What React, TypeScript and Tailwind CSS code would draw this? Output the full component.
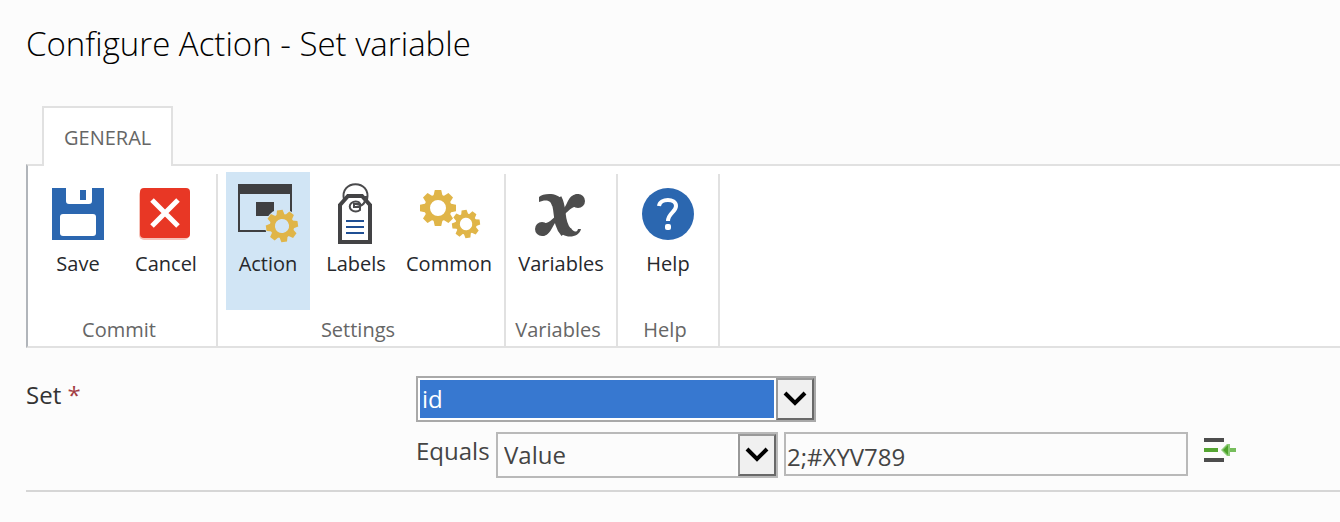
import type { ReactNode, SelectHTMLAttributes } from "react";
import clsx from "clsx";

const TEETH = [0, 45, 90, 135, 180, 225, 270, 315];

type GearProps = { cx: number; cy: number; r: number; turn?: number };

const Gear = ({ cx, cy, r, turn = 0 }: GearProps) => (
  <g transform={`translate(${cx} ${cy}) rotate(${turn}) scale(${r / 18})`}>
    <circle r="10.8" fill="none" stroke="#e0b548" strokeWidth="5.6" />
    {TEETH.map((angle) => (
      <path
        key={angle}
        d="M-4.6-12 L-3.2-18 H3.2 L4.6-12 Z"
        fill="#e0b548"
        transform={`rotate(${angle})`}
      />
    ))}
  </g>
);

const Icon = ({ children }: { children: ReactNode }) => (
  <svg viewBox="0 0 64 64" className="h-16 w-16 shrink-0" aria-hidden="true">
    {children}
  </svg>
);

const SaveIcon = () => (
  <Icon>
    <path d="M6 6H20V19Q20 22 23 22H43Q46 22 46 19V6H58V58H6Z" fill="#2b67b0" />
    <rect x="34" y="8" width="6" height="10" fill="#2b67b0" />
    <rect x="14" y="32" width="36" height="22" rx="3" fill="#fff" />
  </Icon>
);

const CancelIcon = () => (
  <Icon>
    <rect x="5" y="8" width="50" height="50" rx="5" fill="#f6c3ba" />
    <rect x="6" y="6" width="50" height="50" rx="4" fill="#e83725" />
    <path d="M18 18 44 44M44 18 18 44" stroke="#fff" strokeWidth="5" />
  </Icon>
);

const ActionIcon = () => (
  <Icon>
    <rect x="3" y="3" width="52" height="46" fill="none" stroke="#3f3f41" strokeWidth="2" />
    <rect x="2" y="2" width="54" height="10" fill="#3f3f41" />
    <rect x="20" y="20" width="18" height="14" fill="#3f3f41" />
    <circle cx="46" cy="44" r="17" fill="#d1e5f5" />
    <Gear cx={46} cy={44} r={16} turn={-8} />
  </Icon>
);

const LabelsIcon = () => (
  <Icon>
    <path d="M20 18C15-3 48-3 43 18" fill="none" stroke="#4a4a4c" strokeWidth="2" />
    <path
      d="M16 60V23L24 14H38L46 23V60Z"
      fill="#fff"
      stroke="#434345"
      strokeWidth="4"
    />
    <path
      d="M42 14Q42 24 32 25M36 21A6 5 0 1 0 36 28V22H30V25H36"
      fill="none"
      stroke="#4a4a4c"
      strokeWidth="2"
    />
    <path d="M22 39H40M22 45H40M22 51H40" stroke="#1f4f94" strokeWidth="2" />
  </Icon>
);

const CommonIcon = () => (
  <Icon>
    <Gear cx={21} cy={26} r={18} />
    <Gear cx={49} cy={42} r={14} turn={-8} />
  </Icon>
);

const VariablesIcon = () => (
  <Icon>
    <path d="M27 17C33 28 28 40 37 50" fill="none" stroke="#4d4d4d" strokeWidth="12" />
    <path d="M10 20V15C14 11 29 10 33 18L23 24C22 17 15 18 10 20Z" fill="#4d4d4d" />
    <path d="M30 47C32 57 50 57 52 47H49C48 51 44 50 42 46Z" fill="#4d4d4d" />
    <path d="M34 27C40 22 38 12 50 12L52 25C43 23 40 29 36 32Z" fill="#4d4d4d" />
    <path d="M28 39C23 43 22 54 13 54L10 41C19 43 22 38 27 34Z" fill="#4d4d4d" />
    <ellipse cx="49" cy="19" rx="7" ry="7" fill="#4d4d4d" />
    <ellipse cx="13" cy="47" rx="7" ry="7" fill="#4d4d4d" />
  </Icon>
);

const HelpIcon = () => (
  <Icon>
    <circle cx="32" cy="32" r="26" fill="#2b67b0" />
    <path
      d="M23 24C24 16 40 16 40 24C40 30 32 31 32 39"
      fill="none"
      stroke="#fff"
      strokeWidth="4"
    />
    <rect x="29" y="42" width="6" height="6" rx="2" fill="#fff" />
  </Icon>
);

const groups = [
  {
    name: "Commit",
    items: [
      { label: "Save", icon: <SaveIcon /> },
      { label: "Cancel", icon: <CancelIcon /> },
    ],
  },
  {
    name: "Settings",
    items: [
      { label: "Action", icon: <ActionIcon />, active: true },
      { label: "Labels", icon: <LabelsIcon /> },
      { label: "Common", icon: <CommonIcon />, wide: true },
    ],
  },
  {
    name: "Variables",
    items: [{ label: "Variables", icon: <VariablesIcon />, wide: true }],
  },
  { name: "Help", items: [{ label: "Help", icon: <HelpIcon /> }] },
];

type RibbonItem = {
  label: string;
  icon: ReactNode;
  active?: boolean;
  wide?: boolean;
};

const RibbonButton = ({ label, icon, active, wide }: RibbonItem) => (
  <button
    type="button"
    aria-pressed={active}
    className={clsx(
      "flex h-[138px] flex-col items-center gap-[6px] pt-[10px] text-xl leading-6 text-[#26282c]",
      wide ? "w-[94px]" : "w-[84px]",
      active && "bg-[#d1e5f5]"
    )}
  >
    {icon}
    <span className="whitespace-nowrap">{label}</span>
  </button>
);

const Ribbon = () => (
  <div className="flex border-y-2 border-l-2 border-y-[#e1e1e1] border-l-[#b1b5ba] bg-white pt-[6px]">
    {groups.map((group) => (
      <section key={group.name} aria-label={group.name} className="flex">
        <div className="px-2">
          <div className="flex gap-1">
            {group.items.map((item) => (
              <RibbonButton key={item.label} {...item} />
            ))}
          </div>
          <p className="pt-2 pr-[6px] pb-1 text-center text-xl leading-6 text-[#666]">
            {group.name}
          </p>
        </div>
        <span className="mt-[2px] w-[2px] bg-[#e1e1e1]" />
      </section>
    ))}
  </div>
);

type DropDownProps = SelectHTMLAttributes<HTMLSelectElement> & {
  highlighted?: boolean;
};

const DropDown = ({ highlighted, className, children, ...rest }: DropDownProps) => (
  <div
    className={clsx(
      "grid h-[46px] grid-cols-[1fr_40px] border-2",
      highlighted ? "border-[#a9a9a9]" : "border-[#b9b9b9]",
      className
    )}
  >
    <select
      {...rest}
      className={clsx(
        "col-span-2 col-start-1 row-start-1 h-full w-full appearance-none border-2 outline-none",
        highlighted
          ? "border-white bg-[#3778d0] pl-[2px] text-white"
          : "border-transparent bg-[#fcfcfc] pl-1 text-[#444]"
      )}
    >
      {children}
    </select>
    <span className="pointer-events-none col-start-2 row-start-1 flex border-l-2 border-white">
      <span className="flex flex-1 items-center justify-center border-2 border-t-[#999] border-r-[#696969] border-b-[#696969] border-l-[#999] bg-[#f0f0f0]">
        <svg viewBox="0 0 24 16" className="h-4 w-6" aria-hidden="true">
          <path d="M2 2 12 12 22 2" fill="none" stroke="#000" strokeWidth="4" />
        </svg>
      </span>
    </span>
  </div>
);

const VariableForm = () => (
  <form className="flex items-start border-b-2 border-[#d6d6d6] pt-7 pb-3 text-2xl">
    <label htmlFor="variable" className="w-[390px] shrink-0 pt-[3px] text-[#333]">
      Set <span className="text-[#a33e44]">*</span>
    </label>
    <div className="flex flex-col gap-[10px]">
      <DropDown id="variable" highlighted className="w-[400px]">
        <option>id</option>
      </DropDown>
      <div className="flex items-start">
        <label htmlFor="operand" className="w-20 pt-[3px] text-[#444]">
          Equals
        </label>
        <DropDown id="operand" className="w-[282px]">
          <option>Value</option>
        </DropDown>
        <input
          type="text"
          aria-label="Value"
          defaultValue="2;#XYV789"
          className="ml-[6px] h-11 w-[404px] border-2 border-[#b9b9b9] bg-[#fcfcfc] pt-1 pl-px text-[#444] outline-none"
        />
        <button type="button" aria-label="Insert reference" className="ml-4 pt-[6px]">
          <svg viewBox="0 0 32 24" className="h-6 w-8" aria-hidden="true">
            <path d="M0 2H20M0 22H20" stroke="#4d4d4d" strokeWidth="4" />
            <path d="M0 12H14" stroke="#55a532" strokeWidth="4" />
            <path d="M22 12H32" stroke="#76bd5c" strokeWidth="4" />
            <path d="M17 12 23 6H26V18H23Z" fill="#8ccb76" />
            <path d="M19 12 24 7V17Z" fill="#4da32b" />
          </svg>
        </button>
      </div>
    </div>
  </form>
);

const App = () => {
  return (
    <main className="min-h-screen bg-[#fcfcfc] pt-6 pl-[26px] font-['Open_Sans','Noto_Sans',sans-serif]">
      <h1 className="text-[33px] leading-10 font-light text-black">
        Configure Action - Set variable
      </h1>
      <div className="relative z-10 mt-[42px] -mb-[2px] ml-4 flex">
        <button
          type="button"
          className="border-2 border-b-0 border-[#e1e1e1] bg-white px-5 pt-[18px] pb-4 text-xl leading-6 text-[#666]"
        >
          GENERAL
        </button>
      </div>
      <Ribbon />
      <VariableForm />
    </main>
  );
};

export default App;
